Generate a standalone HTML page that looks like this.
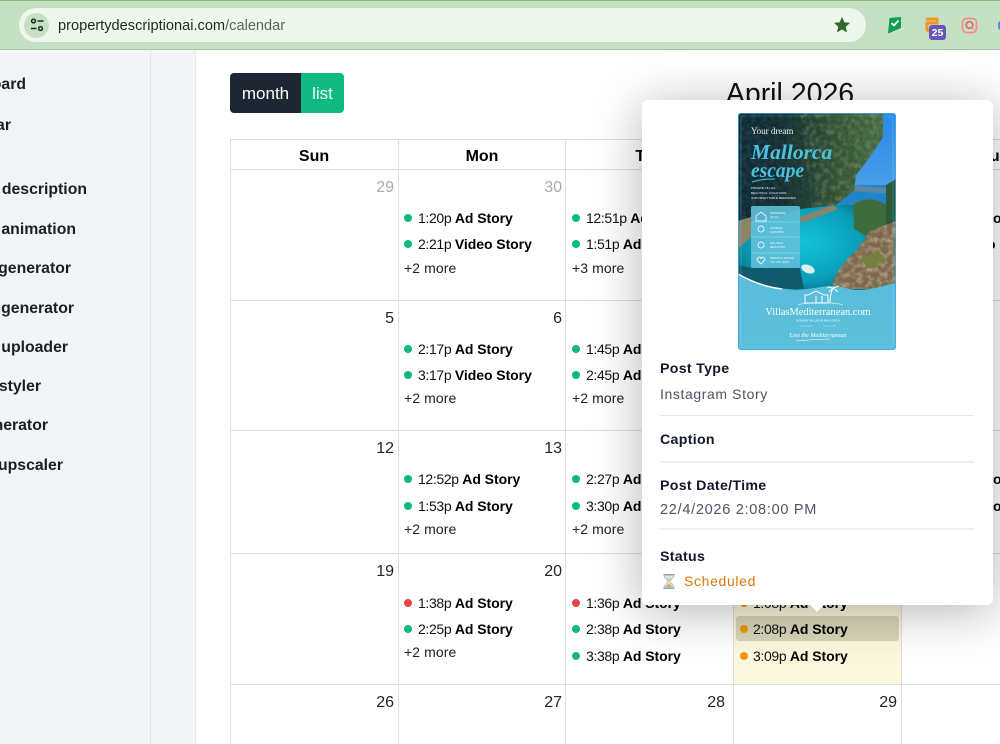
<!DOCTYPE html>
<html lang="en">
<head>
<meta charset="utf-8">
<title>Calendar</title>
<style>
html,body{margin:0;padding:0;background:#fff}
#p{position:relative;width:1000px;height:744px;overflow:hidden;background:#fff;font-family:"Liberation Sans",sans-serif;color:#111}
#p div,#p svg{position:absolute}
.n{font-size:15.8px;font-weight:700;line-height:20px;color:#1b1f24;white-space:nowrap}
.l{background:#dedede}
.h{top:147px;width:168px;text-align:center;font-size:16px;font-weight:700;line-height:20px;color:#000}
.t{width:60px;text-align:right;font-size:16px;line-height:20px;color:#212529}
.e{font-size:14px;line-height:20px;white-space:nowrap;padding-left:14px;color:#111;letter-spacing:-.35px}
.e b{letter-spacing:-.05px;color:#000}
.e i{position:absolute;left:0;top:6px;width:8px;height:8px;border-radius:50%;background:#10b981}
.e.r i{background:#ef4444}
.e.o i{background:#f09a0c}
.e.o{padding-left:13px}
.m{font-size:14px;line-height:20px;color:#222;white-space:nowrap;letter-spacing:.1px}
.pl{left:18px;font-size:14.2px;font-weight:700;line-height:20px;color:#111827;white-space:nowrap;letter-spacing:.3px}
.pv{left:18px;font-size:14px;line-height:20px;color:#4b5563;white-space:nowrap;letter-spacing:.6px}
.pd{left:18px;width:314px;background:#e7e7e7}
</style>
</head>
<body>
<div id="p">

<!-- sidebar -->
<div style="left:0;top:50px;width:196px;height:694px;background:#f3f4f6"></div>
<div style="left:150px;top:50px;width:1px;height:694px;background:#e4e5e8"></div>
<div style="left:195px;top:50px;width:1px;height:694px;background:#e6e7ea"></div>
<div class="n" style="right:974px;top:75px">Dashboard</div>
<div class="n" style="right:989px;top:116px">Calendar</div>
<div class="n" style="right:913px;top:180px">Property description</div>
<div class="n" style="right:924px;top:220px">Image animation</div>
<div class="n" style="right:929px;top:259px">Image generator</div>
<div class="n" style="right:926px;top:299px">Video generator</div>
<div class="n" style="right:932px;top:338px">Bulk uploader</div>
<div class="n" style="right:959px;top:377px">Room styler</div>
<div class="n" style="right:952px;top:416px">Ad generator</div>
<div class="n" style="right:937px;top:456px">Image upscaler</div>

<!-- buttons -->
<div style="left:230px;top:73px;width:71px;height:40px;background:#1c2733;border-radius:4px 0 0 4px"></div>
<div style="left:301px;top:73px;width:43px;height:40px;background:#10b981;border-radius:0 4px 4px 0"></div>
<div style="left:230px;top:84px;width:71px;text-align:center;color:#fff;font-size:17px;line-height:20px">month</div>
<div style="left:301px;top:84px;width:43px;text-align:center;color:#e9fff6;font-size:17px;line-height:20px">list</div>

<!-- title -->
<div style="left:690px;top:77px;width:200px;text-align:center;font-size:28.5px;line-height:34px;color:#111">April 2026</div>

<!-- today cell -->
<div style="left:734px;top:554px;width:167px;height:130px;background:#fcf7df"></div>

<!-- grid lines -->
<div class="l" style="left:230px;top:139px;width:770px;height:1px"></div>
<div class="l" style="left:230px;top:169px;width:770px;height:1px"></div>
<div class="l" style="left:230px;top:300px;width:770px;height:1px"></div>
<div class="l" style="left:230px;top:430px;width:770px;height:1px"></div>
<div class="l" style="left:230px;top:553px;width:770px;height:1px"></div>
<div class="l" style="left:230px;top:684px;width:770px;height:1px"></div>
<div class="l" style="left:230px;top:139px;width:1px;height:605px"></div>
<div class="l" style="left:398px;top:139px;width:1px;height:605px"></div>
<div class="l" style="left:565px;top:139px;width:1px;height:605px"></div>
<div class="l" style="left:733px;top:139px;width:1px;height:605px"></div>
<div class="l" style="left:901px;top:139px;width:1px;height:605px"></div>

<!-- headers -->
<div class="h" style="left:230px">Sun</div>
<div class="h" style="left:398px">Mon</div>
<div class="h" style="left:565px">Tue</div>
<div class="h" style="left:733px">Wed</div>
<div class="h" style="left:901px">Thu</div>

<!-- day numbers -->
<div class="t" style="left:334px;top:178px;color:#aaa">29</div>
<div class="t" style="left:502px;top:178px;color:#aaa">30</div>
<div class="t" style="left:334px;top:309px">5</div>
<div class="t" style="left:502px;top:309px">6</div>
<div class="t" style="left:334px;top:439px">12</div>
<div class="t" style="left:502px;top:439px">13</div>
<div class="t" style="left:334px;top:562px">19</div>
<div class="t" style="left:502px;top:562px">20</div>
<div class="t" style="left:334px;top:693px">26</div>
<div class="t" style="left:502px;top:693px">27</div>
<div class="t" style="left:665px;top:693px;">28</div>
<div class="t" style="left:837px;top:693px">29</div>

<!-- Monday -->
<div class="e" style="left:404px;top:208px"><i></i>1:20p <b>Ad Story</b></div>
<div class="e" style="left:404px;top:234px"><i></i>2:21p <b>Video Story</b></div>
<div class="m" style="left:404px;top:258px">+2 more</div>
<div class="e" style="left:404px;top:339px"><i></i>2:17p <b>Ad Story</b></div>
<div class="e" style="left:404px;top:365px"><i></i>3:17p <b>Video Story</b></div>
<div class="m" style="left:404px;top:388px">+2 more</div>
<div class="e" style="left:404px;top:469px"><i></i>12:52p <b>Ad Story</b></div>
<div class="e" style="left:404px;top:496px"><i></i>1:53p <b>Ad Story</b></div>
<div class="m" style="left:404px;top:519px">+2 more</div>
<div class="e r" style="left:404px;top:593px"><i></i>1:38p <b>Ad Story</b></div>
<div class="e" style="left:404px;top:619px"><i></i>2:25p <b>Ad Story</b></div>
<div class="m" style="left:404px;top:642px">+2 more</div>

<!-- Tuesday -->
<div class="e" style="left:572px;top:208px"><i></i>12:51p <b>Ad Story</b></div>
<div class="e" style="left:572px;top:234px"><i></i>1:51p <b>Ad Story</b></div>
<div class="m" style="left:572px;top:258px">+3 more</div>
<div class="e" style="left:572px;top:339px"><i></i>1:45p <b>Ad Story</b></div>
<div class="e" style="left:572px;top:365px"><i></i>2:45p <b>Ad Story</b></div>
<div class="m" style="left:572px;top:388px">+2 more</div>
<div class="e" style="left:572px;top:469px"><i></i>2:27p <b>Ad Story</b></div>
<div class="e" style="left:572px;top:496px"><i></i>3:30p <b>Ad Story</b></div>
<div class="m" style="left:572px;top:519px">+2 more</div>
<div class="e r" style="left:572px;top:593px"><i></i>1:36p <b>Ad Story</b></div>
<div class="e" style="left:572px;top:619px"><i></i>2:38p <b>Ad Story</b></div>
<div class="e" style="left:572px;top:646px"><i></i>3:38p <b>Ad Story</b></div>

<!-- Wednesday -->
<div style="left:736px;top:616px;width:163px;height:25px;background:#d8d5b9;border-radius:3px"></div>
<div class="e o" style="left:740px;top:593px"><i></i>1:08p <b>Ad Story</b></div>
<div class="e o" style="left:740px;top:619px"><i></i>2:08p <b>Ad Story</b></div>
<div class="e o" style="left:740px;top:646px"><i></i>3:09p <b>Ad Story</b></div>

<!-- Thursday fragments -->
<div style="left:993px;top:208px;font-size:14px;line-height:20px;font-weight:700;color:#000">o</div>
<div style="left:987px;top:234px;font-size:14px;line-height:20px;font-weight:700;color:#000">o</div>
<div style="left:993px;top:469px;font-size:14px;line-height:20px;font-weight:700;color:#000">o</div>
<div style="left:993px;top:496px;font-size:14px;line-height:20px;font-weight:700;color:#000">o</div>

<!-- popover -->
<div style="left:642px;top:100px;width:351px;height:505px;background:#fff;border-radius:6px;box-shadow:0 6px 50px rgba(0,0,0,.3)">
  <svg style="left:96px;top:13px" width="158" height="237" viewBox="0 0 158 237">
    <defs>
      <linearGradient id="sky" x1="0" y1="0" x2="0" y2="1"><stop offset="0" stop-color="#2a8ae6"/><stop offset="1" stop-color="#8fc6ef"/></linearGradient>
      <radialGradient id="wat" cx=".5" cy=".42" r=".62"><stop offset="0" stop-color="#12c2d8"/><stop offset=".65" stop-color="#0a9fbb"/><stop offset="1" stop-color="#0b6a82"/></radialGradient>
      <linearGradient id="dk" x1="0" y1="0" x2="1" y2="0"><stop offset="0" stop-color="#0b2a3e"/><stop offset=".3" stop-color="#0f2c36"/><stop offset=".65" stop-color="#2f5032"/><stop offset="1" stop-color="#4f7646"/></linearGradient>
      <linearGradient id="pan" x1="0" y1="0" x2="0" y2="1"><stop offset="0" stop-color="#58bcdc"/><stop offset="1" stop-color="#5cc0da"/></linearGradient>
      <clipPath id="cl"><rect width="158" height="237" rx="3"/></clipPath>
      <filter id="nz" x="0" y="0" width="100%" height="100%">
        <feTurbulence type="fractalNoise" baseFrequency=".22" numOctaves="2" seed="4"/>
        <feColorMatrix values="0 0 0 0 .04  0 0 0 0 .08  0 0 0 0 .05  1.800 0 0 0 -.6"/>
        <feComposite in2="SourceGraphic" operator="in"/>
      </filter>
      <filter id="nl" x="0" y="0" width="100%" height="100%">
        <feTurbulence type="fractalNoise" baseFrequency=".18" numOctaves="2" seed="9"/>
        <feColorMatrix values="0 0 0 0 .72  0 0 0 0 .76  0 0 0 0 .48  0 1.800 0 0 -.75"/>
        <feComposite in2="SourceGraphic" operator="in"/>
      </filter>
      <filter id="nr" x="0" y="0" width="100%" height="100%">
        <feTurbulence type="fractalNoise" baseFrequency=".2" numOctaves="2" seed="2"/>
        <feColorMatrix values="0 0 0 0 .85  0 0 0 0 .74  0 0 0 0 .56  0 1.800 0 0 -.7"/>
        <feComposite in2="SourceGraphic" operator="in"/>
      </filter>
    </defs>
    <g clip-path="url(#cl)">
      <rect width="158" height="237" fill="url(#sky)"/>
      <rect y="72" x="100" width="58" height="42" fill="#1e86c8"/>
      <path d="M112 72L158 76V81L112 78Z" fill="#5b86a6"/>
      <rect y="92" width="135" height="90" fill="url(#wat)"/>
      <path d="M0 0H145V24L132 44 118 62 116 78 98 92 62 96 40 104 0 112Z" fill="url(#dk)"/>
      <path d="M0 0H145V24L132 44 118 62 116 78 98 92 62 96 40 104 0 112Z" fill="#000" filter="url(#nz)" opacity=".65"/>
      <path d="M62 0H145V24L132 44 118 62 116 78 98 92 74 94Z" fill="#000" filter="url(#nl)" opacity=".32"/>
      <path d="M0 108L13 104V124L0 136ZM62 104L95 92 100 96 64 110Z" fill="#8b8468"/>
      <path d="M115 92C125 84 142 84 152 96L150 112 130 124 116 116Z" fill="#3f6c3c"/>
      <path d="M148 72L158 66V118L148 110Z" fill="#2c5a3a"/>
      <path d="M94 176C96 160 108 146 118 138L132 118 158 108V176Z" fill="#7d6a4e"/>
      <path d="M94 176C96 160 108 146 118 138L132 118 158 108V176Z" fill="#000" filter="url(#nr)" opacity=".55"/>
      <path d="M122 146l18-8 8 8-16 10z" fill="#75823f"/>
      <path d="M0 152L13 155 62 155 66 176H0Z" fill="#11596c"/>
      <ellipse cx="70" cy="156" rx="7" ry="4" transform="rotate(22 70 156)" fill="#e6ecee"/>
      <rect x="13" y="93" width="49" height="62" rx="2" fill="#5fc0d8" fill-opacity=".9"/>
      <path d="M14 109H61M14 124H61M14 140H61" stroke="#a6e0ec" stroke-width=".5"/>
      <path d="M18 103l5-4 5 4v5H18z" fill="none" stroke="#fff" stroke-width=".8"/>
      <circle cx="23" cy="116" r="3" fill="none" stroke="#fff" stroke-width=".8"/>
      <circle cx="23" cy="132" r="3" fill="none" stroke="#fff" stroke-width=".8"/>
      <path d="M19 146c2-3 4-2 4 0 0-2 2-3 4 0-1 3-3 4-4 5-1-1-3-2-4-5z" fill="none" stroke="#fff" stroke-width=".8"/>
      <text x="13" y="21" font-family="Liberation Serif,serif" font-size="9" fill="#f2f2ea">Your dream</text>
      <text x="13" y="46" font-family="Liberation Serif,serif" font-style="italic" font-weight="700" font-size="21.500" fill="#4fc0e0">Mallorca</text>
      <text x="13" y="64" font-family="Liberation Serif,serif" font-style="italic" font-weight="700" font-size="19.500" fill="#4fc0e0">escape</text>
      <path d="M14 69C22 66 30 66 37 66" stroke="#4fc0e0" fill="none"/>
      <text x="13" y="76" font-family="Liberation Sans,sans-serif" font-size="3.100" fill="#eef">PRIVATE VILLAS.</text>
      <text x="13" y="81" font-family="Liberation Sans,sans-serif" font-size="3.100" fill="#eef">BEAUTIFUL LOCATIONS.</text>
      <text x="13" y="86" font-family="Liberation Sans,sans-serif" font-size="3.100" fill="#eef">UNFORGETTABLE MEMORIES.</text>
      <g font-family="Liberation Sans,sans-serif" font-size="2.400" fill="#eafaff">
        <text x="32" y="101">HANDPICKED</text><text x="32" y="105">VILLAS</text>
        <text x="32" y="116">STUNNING</text><text x="32" y="120">LOCATIONS</text>
        <text x="32" y="131">SUN, SEA &amp;</text><text x="32" y="135">RELAXATION</text>
        <text x="32" y="146">PERSONAL SERVICE</text><text x="32" y="150">YOU CAN TRUST</text>
      </g>
      <path d="M0 162C14 170 28 174 58 177C75 176 85 173 95 173C105 173 110 177 120 177C135 177 148 172 158 170V237H0Z" fill="url(#pan)"/>
      <path d="M0 161C14 169 28 174 44 176" stroke="#fff" stroke-width="1.500" fill="none"/>
      <path d="M67 190h23v-8h-4l-8-4-8 4h-3zM78 190v-7M84 190v-7" fill="none" stroke="#fff"/>
      <path d="M92 190C92 184 93 179 95 175M95 175l-6-1M95 175l6-2M95 175l-4 4M95 175l5 4" stroke="#fff" fill="none"/>
      <path d="M60 191.500C75 189 90 189 105 191.500" stroke="#fff" stroke-width=".5" fill="none"/>
      <text x="80" y="202" text-anchor="middle" font-family="Liberation Serif,serif" font-size="10.400" fill="#fff">VillasMediterranean.com</text>
      <text x="80" y="208.500" text-anchor="middle" font-family="Liberation Sans,sans-serif" font-size="2.900" fill="#eafaff">HOLIDAY VILLAS IN MALLORCA</text>
      <path d="M62 213H75M85 213H98" stroke="#d7f2f8" stroke-width=".4"/>
      <text x="80" y="224" text-anchor="middle" font-family="Liberation Serif,serif" font-style="italic" font-size="6" fill="#fff">Live the Mediterranean</text>
      <path d="M58 228C70 227 82 226 92 226" stroke="#fff" stroke-width=".6" fill="none"/>
      <rect x="3" y="3" width="152" height="231" rx="2" fill="none" stroke="#a8dcec" stroke-opacity=".45" stroke-width=".6"/>
      <rect x=".5" y=".5" width="157" height="236" rx="3" fill="none" stroke="#3fa9ea" stroke-opacity=".75"/>
    </g>
  </svg>
  <div class="pl" style="top:259px">Post Type</div>
  <div class="pv" style="top:284px">Instagram Story</div>
  <div class="pd" style="top:315px;height:1px"></div>
  <div class="pl" style="top:330px">Caption</div>
  <div class="pd" style="top:361px;height:2px;background:#efefef"></div>
  <div class="pl" style="top:376px">Post Date/Time</div>
  <div class="pv" style="top:400px;font-size:14.5px;letter-spacing:.72px">22/4/2026 2:08:00 PM</div>
  <div class="pd" style="top:428px;height:2px;background:#efefef"></div>
  <div class="pl" style="top:447px">Status</div>
  <svg style="left:20px;top:474px" width="14" height="15" viewBox="0 0 14 15">
    <path d="M2 1H12V2.500L7.800 7.500 12 12.500V14H2V12.500L6.200 7.500 2 2.500Z" fill="#dbe6ee" stroke="#9fb4c2" stroke-width=".7"/>
    <path d="M3.500 13L7 9.500 10.500 13Z" fill="#f0a83a"/>
    <path d="M4.500 4.500H9.500L7 7.300Z" fill="#f0bf6a"/>
    <rect x="1.500" y="0" width="11" height="1.500" fill="#8fa5b5"/>
    <rect x="1.500" y="13.500" width="11" height="1.500" fill="#8fa5b5"/>
  </svg>
  <div class="pv" style="left:42px;top:471px;color:#d97706;letter-spacing:.65px">Scheduled</div>
  <div style="left:168px;top:505px;width:0;height:0;border-left:7px solid transparent;border-right:7px solid transparent;border-top:7px solid #fff"></div>
</div>

<!-- browser toolbar -->
<div style="left:0;top:0;width:1000px;height:50px;background:#c6e0c4"></div>
<div style="left:0;top:0;width:1000px;height:1px;background:#7fbe7f"></div>
<div style="left:0;top:49px;width:1000px;height:1px;background:#a9c4a8"></div>
<div style="left:19px;top:8px;width:847px;height:34px;background:#eff6ee;border-radius:17px"></div>
<div style="left:24px;top:13px;width:25px;height:25px;background:#c6e0c4;border-radius:50%"></div>
<svg style="left:29px;top:17px" width="16" height="16" viewBox="0 0 16 16" fill="none" stroke="#1f2a20" stroke-width="1.500">
  <circle cx="4.500" cy="4" r="1.900"/><path d="M8.500 4H14.500"/>
  <circle cx="11.500" cy="11.500" r="1.900"/><path d="M2 11.500H7.500"/>
</svg>
<div style="left:58px;top:16px;font-size:14.6px;line-height:20px;color:#1d2a1f;white-space:nowrap">propertydescriptionai.com<span style="color:#5a665b">/calendar</span></div>
<svg style="left:833px;top:16px" width="18" height="18" viewBox="0 0 18 18"><path d="M9 1l2.400 5.300 5.600.6-4.200 3.800 1.200 5.700L9 13.500 4 16.400l1.200-5.700L1 6.900l5.600-.6z" fill="#2f6a2d"/></svg>
<svg style="left:886px;top:16px" width="17" height="19" viewBox="0 0 17 19">
  <path d="M3.500 2L15 1V12L2 17.500Z" fill="#0f9d58"/>
  <path d="M5.500 7L8 9.500 12.500 4.500" fill="none" stroke="#fff" stroke-width="1.800"/>
</svg>
<svg style="left:924px;top:16px" width="16" height="18" viewBox="0 0 16 18" fill="none" stroke="#f7931e" stroke-width="3">
  <path d="M2 3H13V7H3V13C3 14 4 15 6 15"/>
</svg>
<div style="left:929px;top:25px;width:17px;height:15px;background:#6a55b8;border-radius:3px;color:#fff;font-size:10.500px;font-weight:700;line-height:16px;text-align:center">25</div>
<svg style="left:961px;top:17px" width="17" height="17" viewBox="0 0 17 17" fill="none" stroke-width="1.700">
  <rect x="1.500" y="1.500" width="14" height="14" rx="4" stroke="#f58a8a"/>
  <circle cx="8.500" cy="8" r="3.300" stroke="#e8607f"/>
  <path d="M10.800 10.500L13 12.700" stroke="#f5a35c"/>
</svg>
<div style="left:998px;top:21px;width:6px;height:9px;background:#4a90e2;border-radius:3px"></div>

</div>
</body>
</html>
